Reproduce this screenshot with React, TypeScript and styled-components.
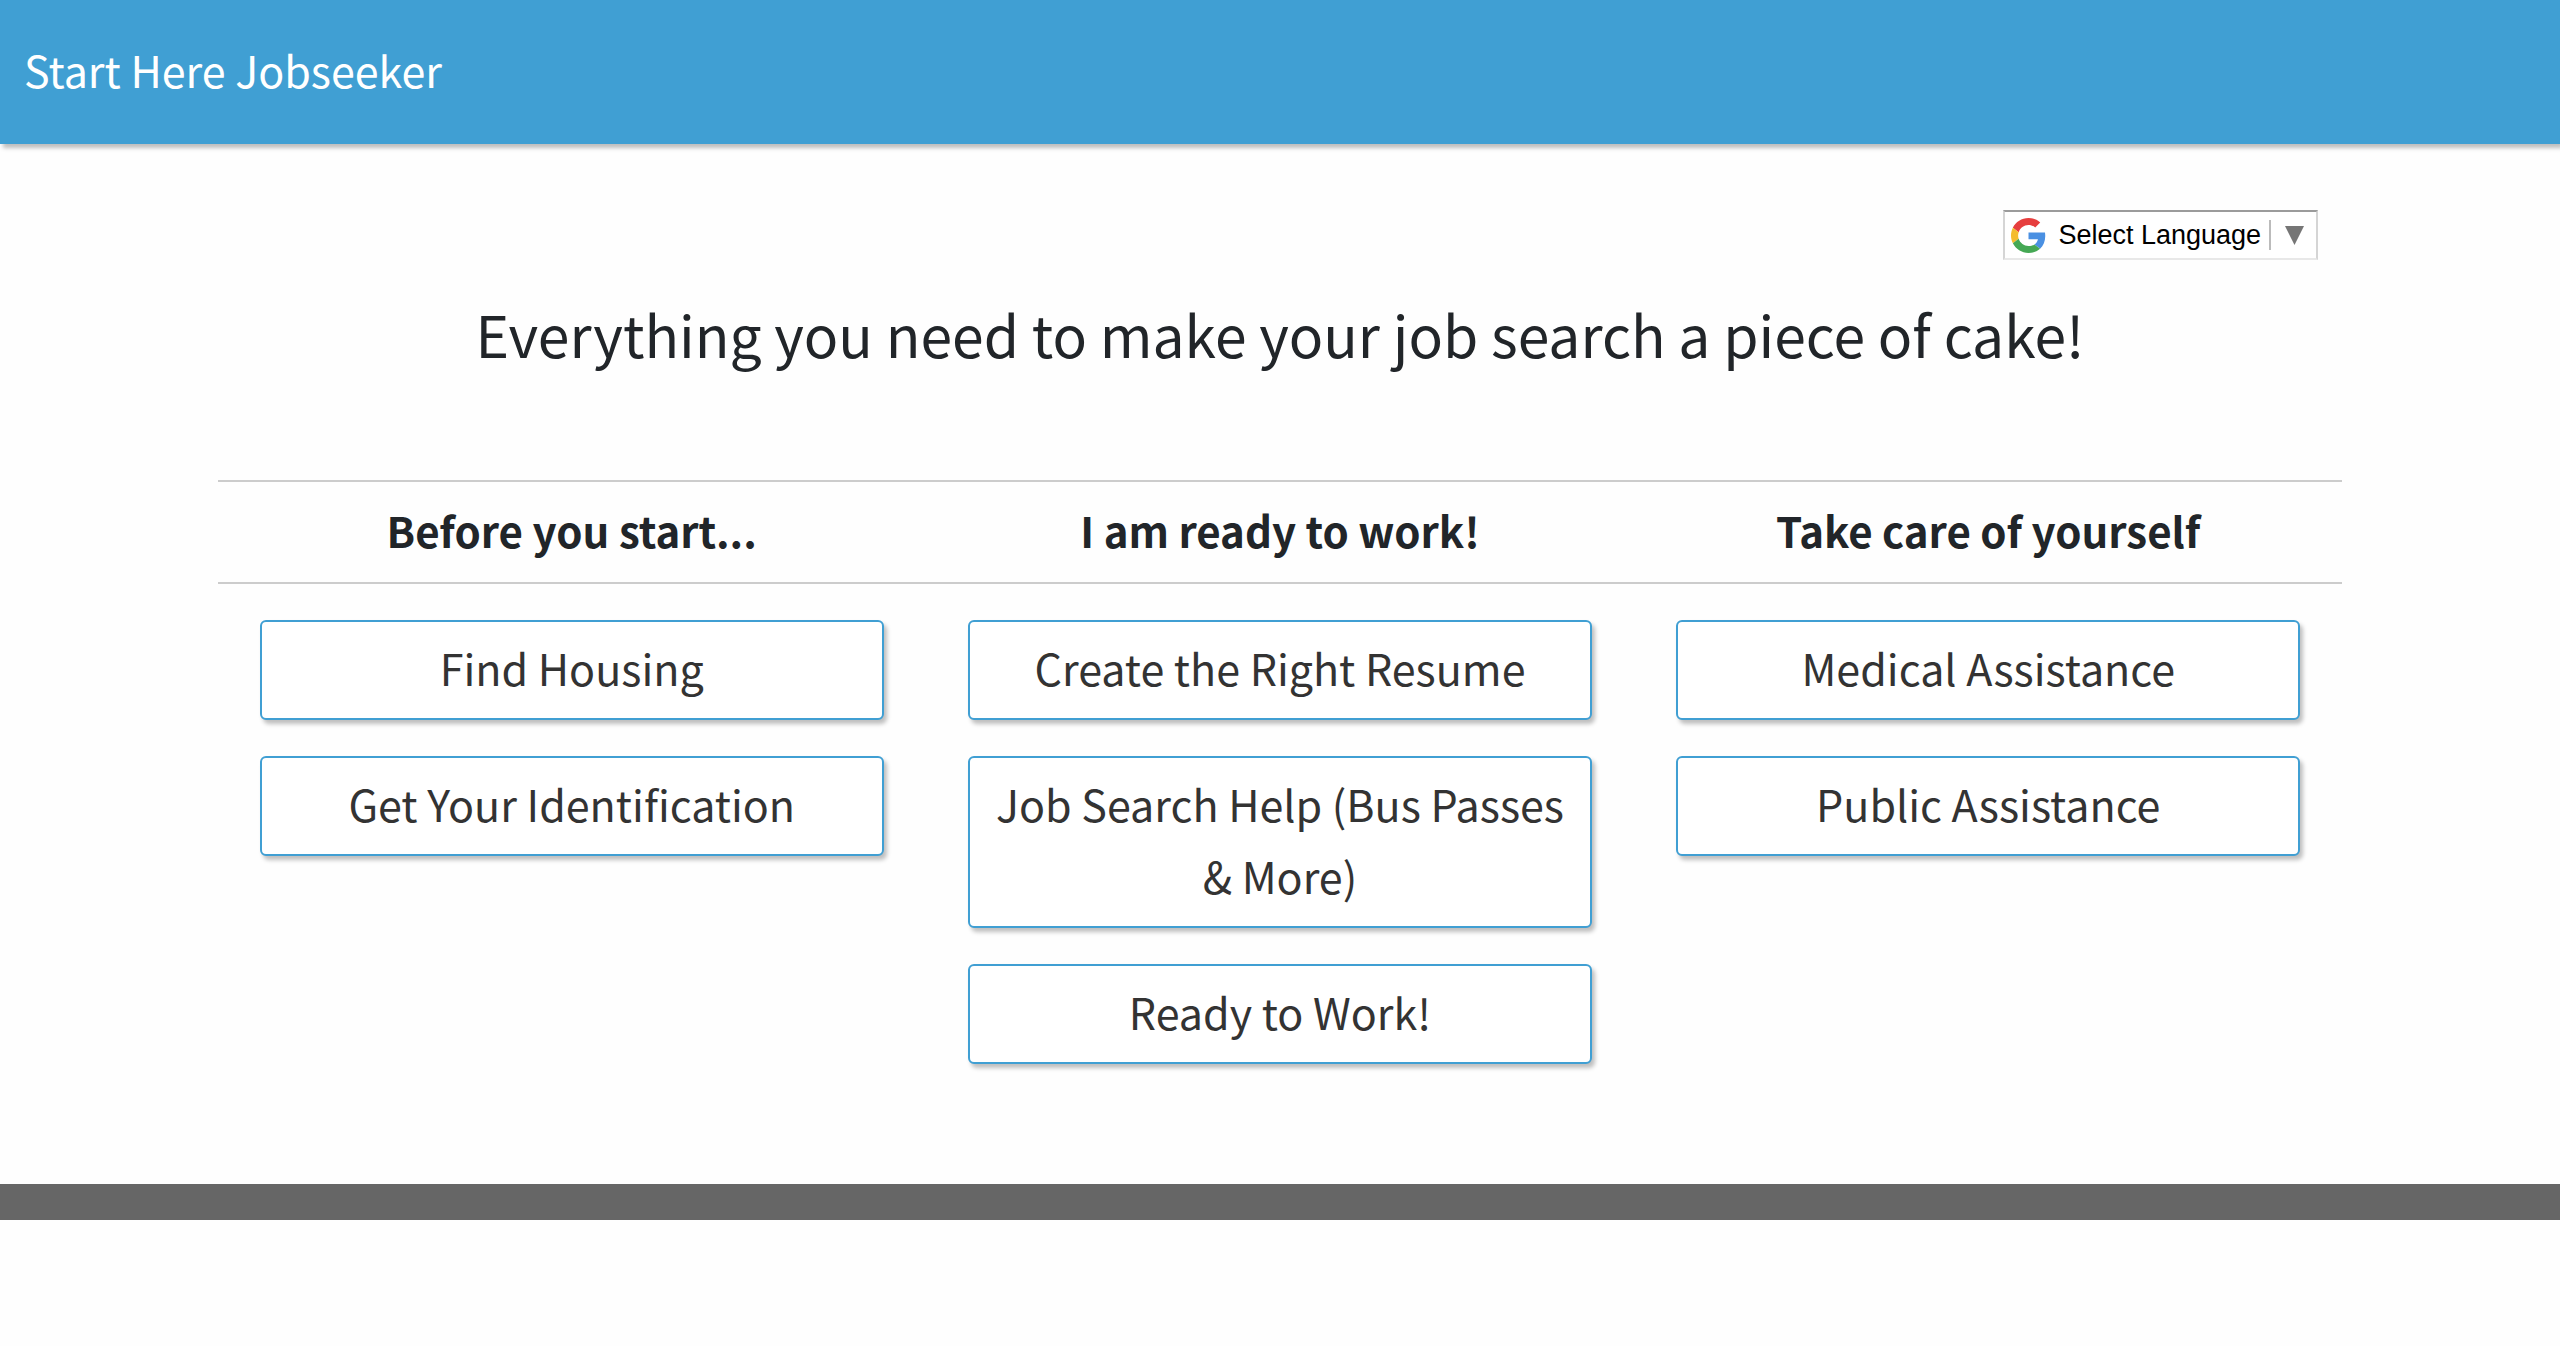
import React from "react";
import styled, { createGlobalStyle } from "styled-components";

const GlobalStyle = createGlobalStyle`
  *, *::before, *::after { box-sizing: border-box; }
  body {
    margin: 0;
    background: #fefefe;
    color: #212529;
    font-family: "Source Sans Pro", "Noto Sans CJK SC", "Noto Sans", sans-serif;
    font-size: 43px;
    line-height: 72px;
  }
`;

const Header = styled.header`
  padding: 33px 24px 39px;
  background: #409fd3;
  color: #fff;
  box-shadow: 3px 4px 4px rgba(0, 0, 0, 0.25);
`;

const Brand = styled.a`
  display: inline-block;
  vertical-align: top;
  color: inherit;
  text-decoration: none;
`;

const Main = styled.main`
  width: 83%;
  margin: 0 auto;
  padding: 66px 0 120px;
`;

const Toolbar = styled.div`
  display: flex;
  justify-content: flex-end;
  padding-right: 24px;
`;

const LanguagePicker = styled.div`
  display: flex;
  align-items: center;
  height: 50px;
  padding: 0 12px 0 6px;
  border: 2px solid #d5d5d5;
  border-top-color: #9b9b9b;
  border-bottom-color: #e8e8e8;
  background: #fff;
`;

const LanguageSelect = styled.select`
  appearance: none;
  margin: 0 8px 0 12px;
  padding: 0;
  border: 0;
  background: transparent;
  color: #000;
  font: 27px/32px "Liberation Sans", Arial, sans-serif;
`;

const Divider = styled.span`
  width: 2px;
  height: 30px;
  margin-right: 14px;
  background: #bbb;
`;

const Title = styled.h1`
  margin: 24px 0 98px;
  font-size: 57px;
  font-weight: 400;
  line-height: 98px;
  text-align: center;
`;

const Columns = styled.div`
  display: grid;
  grid-template-columns: repeat(3, 1fr);
`;

const Column = styled.section`
  min-width: 0;
`;

const ColumnTitle = styled.h2`
  margin: 0;
  padding: 12px 0 16px;
  border: solid #ccc;
  border-width: 2px 0;
  font-size: 42px;
  font-weight: 700;
  line-height: 72px;
  text-align: center;
`;

const LinkList = styled.div`
  display: flex;
  flex-direction: column;
  gap: 36px;
  padding: 36px 42px 0;
`;

const LinkButton = styled.button`
  padding: 9px 24px 15px;
  border: 2px solid #409fd3;
  border-radius: 6px;
  background: #fff;
  color: #333;
  font: inherit;
  text-align: center;
  cursor: pointer;
  box-shadow: 3px 4px 4px rgba(0, 0, 0, 0.25);
`;

const Footer = styled.footer`
  height: 36px;
  background: #666;
`;

const sections = [
  { title: "Before you start...", links: ["Find Housing", "Get Your Identification"] },
  {
    title: "I am ready to work!",
    links: ["Create the Right Resume", "Job Search Help (Bus Passes & More)", "Ready to Work!"],
  },
  { title: "Take care of yourself", links: ["Medical Assistance", "Public Assistance"] },
];

const GoogleLogo = () => (
  <svg width="35" height="35" viewBox="0 0 48 48" aria-hidden="true">
    <path fill="#e63e3e" d="M24 9.5c3.54 0 6.71 1.22 9.21 3.6l6.85-6.85C35.9 2.38 30.47 0 24 0 14.62 0 6.51 5.38 2.56 13.22l7.98 6.19C12.43 13.72 17.74 9.5 24 9.5z" />
    <path fill="#4a90e2" d="M46.98 24.55c0-1.57-.15-3.09-.38-4.55H24v9.02h12.94c-.58 2.96-2.26 5.48-4.78 7.18l7.73 6c4.51-4.18 7.09-10.36 7.09-17.65z" />
    <path fill="#f4bc2e" d="M10.53 28.59c-.48-1.45-.76-2.99-.76-4.59s.27-3.14.76-4.59l-7.98-6.19C.92 16.46 0 20.12 0 24c0 3.88.92 7.54 2.56 10.78l7.97-6.19z" />
    <path fill="#45a854" d="M24 48c6.48 0 11.93-2.13 15.89-5.81l-7.73-6c-2.15 1.45-4.92 2.3-8.16 2.3-6.26 0-11.57-4.22-13.47-9.91l-7.98 6.19C6.51 42.62 14.62 48 24 48z" />
  </svg>
);

const Arrow = () => (
  <svg width="19" height="20" viewBox="0 0 20 20" preserveAspectRatio="none" aria-hidden="true">
    <path fill="#767676" d="M0 1h20L10 20z" />
  </svg>
);

export default function App() {
  return (
    <>
      <GlobalStyle />
      <Header>
        <Brand href="#">Start Here Jobseeker</Brand>
      </Header>
      <Main>
        <Toolbar>
          <LanguagePicker>
            <GoogleLogo />
            <LanguageSelect aria-label="Select Language">
              <option>Select Language</option>
            </LanguageSelect>
            <Divider />
            <Arrow />
          </LanguagePicker>
        </Toolbar>
        <Title>Everything you need to make your job search a piece of cake!</Title>
        <Columns>
          {sections.map((section) => (
            <Column key={section.title}>
              <ColumnTitle>{section.title}</ColumnTitle>
              <LinkList>
                {section.links.map((link) => (
                  <LinkButton key={link} type="button">
                    {link}
                  </LinkButton>
                ))}
              </LinkList>
            </Column>
          ))}
        </Columns>
      </Main>
      <Footer />
    </>
  );
}
